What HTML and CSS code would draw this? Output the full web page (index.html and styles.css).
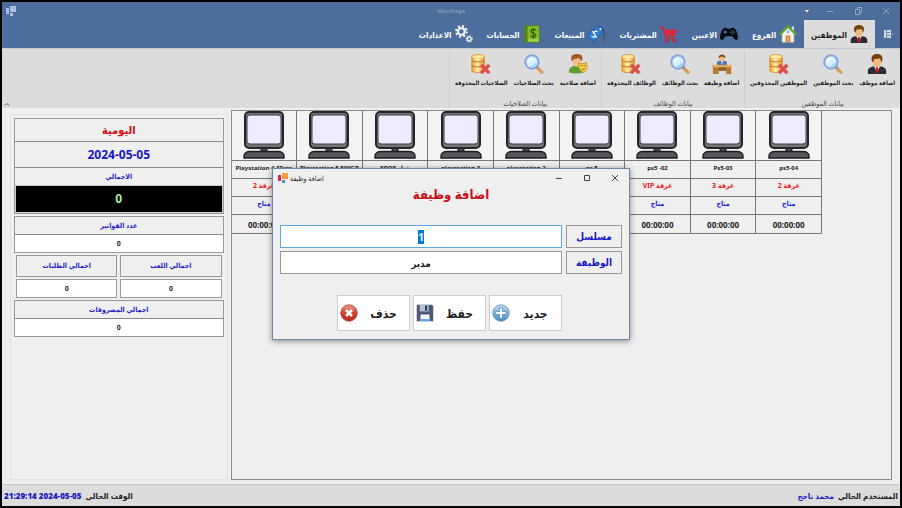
FILE: index.html
```html
<!DOCTYPE html>
<html lang="ar" dir="rtl">
<head>
<meta charset="UTF-8" />
<title>MainPage</title>
<link rel="stylesheet" href="styles.css">
</head>
<body>
  <svg class="sprite" aria-hidden="true">
    <defs>
      <linearGradient id="gold" x2="1"><stop offset="0" stop-color="#e9a02c"/><stop offset=".45" stop-color="#fff0b0"/><stop offset="1" stop-color="#df9428"/></linearGradient>
      <linearGradient id="blue" x2="0" y2="1"><stop offset="0" stop-color="#bfe0f2"/><stop offset="1" stop-color="#4787c4"/></linearGradient>
      <linearGradient id="red" x2="0" y2="1"><stop offset="0" stop-color="#ee9a8c"/><stop offset=".5" stop-color="#d2412f"/><stop offset="1" stop-color="#b52a1e"/></linearGradient>
    </defs>
    <symbol id="i-man" viewBox="0 0 24 24">
      <path d="M1 24v-4c0-3 4-5 7-5h8c3 0 7 2 7 5v4z" fill="#2b2b33"/>
      <path d="M8 14l4 8 4-8z" fill="#eee"/>
      <path d="M11 15.500h2l1 5.500-2 2.500-2-2.500z" fill="#d01820"/>
      <path d="M7 6c0-3 10-3 10 0v4c0 4-3 6-5 6s-5-2-5-6z" fill="#f1b780"/>
      <path d="M6 9c-2-6 1-9 6-9s8 3 6 9l-1 1c0-2-1-4-2-5-2 1-4 1-6 1l-2 4z" fill="#754012"/>
    </symbol>
    <symbol id="i-search" viewBox="0 0 24 24">
      <path d="M15.500 16l6 6" stroke="#d79b59" stroke-width="4" stroke-linecap="round"/>
      <path d="M14 14l3 3" stroke="#7c8fae" stroke-width="3"/>
      <circle cx="9.500" cy="9.500" r="8" fill="#d8f0fd" stroke="#86a6dc" stroke-width="2.500"/>
      <path d="M5 10c0-4 3-6 7-5-3 1-5 3-7 5z" fill="#fff"/>
      <path d="M7 14c3 1 6-1 8-5 0 5-4 8-8 5z" fill="#82c9f3"/>
    </symbol>
    <symbol id="i-deleted" viewBox="0 0 24 24">
      <path d="M1 3c0-3 15-3 15 0v17c0 3-15 3-15 0z" fill="url(#gold)" stroke="#d18d2b"/>
      <path d="M1 8c2 2 13 2 15 0M1 14c2 2 13 2 15 0" fill="none" stroke="#c98025" stroke-width="1.500"/>
      <ellipse cx="8.500" cy="3.300" rx="7" ry="2" fill="#ffe6a0"/>
      <path d="M12 13l10 10M22 13L12 23" stroke="#d94f48" stroke-width="4"/>
    </symbol>
    <symbol id="i-desk" viewBox="0 0 24 24">
      <path d="M6 14v-3c0-3 3-3 6-3s6 0 6 3v3z" fill="#5474b4"/>
      <path d="M11 8h2l-1 5z" fill="#fff"/>
      <circle cx="12" cy="5" r="3.500" fill="#f3bd87"/>
      <path d="M8 5c-1-6 9-6 8 0-2-1-3-2-4-2s-2 1-4 2z" fill="#7e4818"/>
      <path d="M0 13h24v3H0z" fill="#e1ad62"/>
      <path d="M1 16h22v8h-6v-4H8v4H1z" fill="#b87932"/>
      <path d="M8 16h9v4H8z" fill="#965d22"/>
    </symbol>
    <symbol id="i-role" viewBox="0 0 24 24">
      <path d="M1 22c0-6 3-7 7-8h5c4 1 6 3 6 8-5 2-13 2-18 0z" fill="#5c9e31"/>
      <path d="M6 6h9v4c0 7-9 7-9 0z" fill="#f4bd88"/>
      <path d="M5 9C2 3 5 0 11 0s8 4 5 9c-1-2-2-4-4-4-2 1-4 1-5 1z" fill="#a35a22"/>
      <path d="M13 11c3 1 6 1 9-1 2 7 0 11-4 12-3-1-6-5-5-11z" fill="#f7ce45" stroke="#b98b1c"/>
      <path d="M15 14h2m2 0h2m-5 4c2 1 2 1 4-1" fill="none" stroke="#6c4b12"/>
    </symbol>
    <symbol id="i-house" viewBox="0 0 24 24">
      <path d="M4 11l8-8 8 8v12H4z" fill="#f5f5ee" stroke="#aaa"/>
      <path d="M17 2h3v7l-3-3z" fill="#d9e2e8"/>
      <path d="M1 13L12 2l11 11" fill="none" stroke="#63a62f" stroke-width="3"/>
      <path d="M9 14h6v9H9z" fill="#c9742c"/>
      <path d="M10.500 15h3v7h-3z" fill="#eda75e"/>
      <circle cx="12" cy="9" r="2" fill="#7cb6e5"/>
    </symbol>
    <symbol id="i-pad" viewBox="0 0 24 24">
      <path d="M6 4c2-1 3 1 4 1h4c1 0 2-2 4-1 4 1 5 7 6 12 0 5-4 5-6 1-1-2-2-2-3-2H9c-1 0-2 0-3 2-2 4-6 4-6-1C1 11 2 5 6 4z" fill="#090b10"/>
      <path d="M4.500 9.500h5M7 7v5" stroke="#4c6d9d" stroke-width="1.500"/>
      <g fill="#4c6d9d"><circle cx="17" cy="7.500" r="1"/><circle cx="17" cy="11.500" r="1"/><circle cx="15" cy="9.500" r="1"/><circle cx="19" cy="9.500" r="1"/></g>
    </symbol>
    <symbol id="i-cart" viewBox="0 0 24 24">
      <path d="M0 3h4l4 15h12" fill="none" stroke="#cf2338" stroke-width="2"/>
      <path d="M5 6h18l-3 9H8z" fill="#d8283e"/>
      <circle cx="9" cy="21" r="2.300" fill="#cf2338"/><circle cx="19" cy="21" r="2.300" fill="#cf2338"/>
    </symbol>
    <symbol id="i-tag" viewBox="0 0 24 24">
      <path d="M19 4c6 3 5 10 2 18" fill="none" stroke="#444c5a" stroke-width="1.500"/>
      <path d="M0 14L13 2l7 1 1 7L9 23z" fill="#2d7dcc" stroke="#1f579d"/>
      <circle cx="18" cy="5.500" r="1.300" fill="#fff"/>
      <path d="M14 9c-3-2-6 0-4 3s0 6-4 3M7 8l6 9" fill="none" stroke="#fff" stroke-width="1.600"/>
    </symbol>
    <symbol id="i-book" viewBox="0 0 24 24">
      <path d="M2 1h20v22H2z" fill="#83b92b" stroke="#4e7914"/>
      <path d="M2 1h4v22H2z" fill="#55831a"/>
      <path d="M7 19h14v3H7z" fill="#a6d253"/>
      <path d="M17 7c-3-3-7-1-6 2s7 2 6 5-5 3-7 0M14 4v14" fill="none" stroke="#345d0b" stroke-width="1.800"/>
    </symbol>
    <symbol id="i-gears" viewBox="0 0 24 24">
      <circle cx="8.500" cy="8.500" r="4.500" fill="none" stroke="#eef0f3" stroke-width="3"/>
      <circle cx="8.500" cy="8.500" r="7" fill="none" stroke="#eef0f3" stroke-width="3" stroke-dasharray="2.750 2.750"/>
      <circle cx="19" cy="18.500" r="2.500" fill="none" stroke="#dfe3e8" stroke-width="2"/>
      <circle cx="19" cy="18.500" r="4" fill="none" stroke="#dfe3e8" stroke-width="2" stroke-dasharray="1.570 1.570"/>
    </symbol>
    <symbol id="i-screen" viewBox="0 0 42 48">
      <path d="M18 37h6v6h-6z" fill="#4b4b50" stroke="#1e1e20"/>
      <path d="M1 47v-2c0-3 3-4.500 6-4.500h28c3 0 6 1.500 6 4.500v2z" fill="#56565c" stroke="#1e1e20" stroke-width="1.400"/>
      <rect x="2" y="1" width="38" height="36" rx="4" fill="#737379" stroke="#262629" stroke-width="2"/>
      <rect x="4" y="4" width="34" height="29" rx="3" fill="#eeeaff" stroke="#414147"/>
    </symbol>
    <symbol id="i-plus" viewBox="0 0 24 24">
      <circle cx="12" cy="12" r="11" fill="url(#blue)" stroke="#5486ae"/>
      <path d="M10 5h4v5h5v4h-5v5h-4v-5H5v-4h5z" fill="#f4fbff" stroke="#4c83b5"/>
    </symbol>
    <symbol id="i-save" viewBox="0 0 24 24">
      <path d="M1 1h20l2 2v20H1z" fill="#4d5875"/>
      <path d="M5 1h12v9H5z" fill="#b9c2d4"/><path d="M12 2h3v7h-3z" fill="#39435d"/>
      <path d="M6 14h12v9H6z" fill="#f3f7fb"/><path d="M6 20h12v3H6z" fill="#5aa9e4"/>
    </symbol>
    <symbol id="i-remove" viewBox="0 0 24 24">
      <circle cx="12" cy="12" r="11" fill="url(#red)" stroke="#a43b31"/>
      <path d="M8 8l8 8M16 8l-8 8" stroke="#fff" stroke-width="3.500"/>
    </symbol>
    <symbol id="i-min" viewBox="0 0 10 10"><path d="M2 5.500h6" stroke="currentColor"/></symbol>
    <symbol id="i-max" viewBox="0 0 10 10"><path d="M2.500 2.500h5v5h-5z" fill="none" stroke="currentColor"/></symbol>
    <symbol id="i-restore" viewBox="0 0 10 10"><path d="M2.500 3.500h4v5h-4zM4.500 3V1.500h4v5H7" fill="none" stroke="currentColor"/></symbol>
    <symbol id="i-close" viewBox="0 0 10 10"><path d="M2 2l6 6M8 2L2 8" stroke="currentColor"/></symbol>
  </svg>

  <div class="window">
    <header class="titlebar" dir="ltr">
      <svg class="app-icon" viewBox="0 0 10 10"><path d="M4 0h6v6H4zM0 2h3v6H0zM4 7h3v3H4z" fill="#a9bfe2"/></svg>
      <h1>MainPage</h1>
      <div class="window-buttons">
        <button class="more" aria-label="Options"><svg viewBox="0 0 10 10"><path d="M3 4h4L5 6.500z" fill="#fff"/></svg></button>
        <button aria-label="Minimize"><svg><use href="#i-min"/></svg></button>
        <button aria-label="Restore"><svg><use href="#i-restore"/></svg></button>
        <button aria-label="Close"><svg><use href="#i-close"/></svg></button>
      </div>
    </header>

    <nav class="tabs">
      <button class="file" aria-label="القائمة"><svg viewBox="0 0 10 8"><path d="M1 0h7v8H1z" fill="#cfd9e8"/><path d="M3.500 0v8M4 2.500h3M4 5.500h3" stroke="#71839d"/><path d="M9 4h1" stroke="#dfe6f1"/></svg></button>
      <button class="active"><svg><use href="#i-man"/></svg>الموظفين</button>
      <button><svg><use href="#i-house"/></svg>الفروع</button>
      <button><svg><use href="#i-pad"/></svg>الاعبين</button>
      <button><svg><use href="#i-cart"/></svg>المشتريات</button>
      <button><svg><use href="#i-tag"/></svg>المبيعات</button>
      <button><svg><use href="#i-book"/></svg>الحسابات</button>
      <button><svg><use href="#i-gears"/></svg>الاعدادات</button>
    </nav>

    <div class="ribbon">
      <section class="group">
        <div class="tools">
          <button><svg><use href="#i-man"/></svg>اضافة موظف</button>
          <button><svg><use href="#i-search"/></svg>بحث الموظفين</button>
          <button><svg><use href="#i-deleted"/></svg>الموظفين المحذوفين</button>
        </div>
        <h2>بيانات الموظفين</h2>
      </section>
      <section class="group">
        <div class="tools">
          <button><svg><use href="#i-desk"/></svg>اضافة وظيفة</button>
          <button><svg><use href="#i-search"/></svg>بحث الوظائف</button>
          <button><svg><use href="#i-deleted"/></svg>الوظائف المحذوفة</button>
        </div>
        <h2>بيانات الوظائف</h2>
      </section>
      <section class="group">
        <div class="tools">
          <button><svg><use href="#i-role"/></svg>اضافة صلاحية</button>
          <button><svg><use href="#i-search"/></svg>بحث الصلاحيات</button>
          <button><svg><use href="#i-deleted"/></svg>الصلاحيات المحذوفة</button>
        </div>
        <h2>بيانات الصلاحيات</h2>
      </section>
      <button class="collapse" aria-label="طي"><svg viewBox="0 0 6 4"><path d="M1 3.500l2-2 2 2" fill="none" stroke="#555"/></svg></button>
    </div>

    <main>
      <div class="stations" dir="ltr">
        <article class="station"><div class="screen"><svg><use href="#i-screen"/></svg></div><h3>Playstation 4 1Tera</h3><p class="room" dir="rtl">غرفة 2</p><p class="state">متاح</p><time>00:00:00</time></article>
        <article class="station"><div class="screen"><svg><use href="#i-screen"/></svg></div><h3>Playstation 5 500GB</h3><p class="room" dir="rtl">غرفة 2</p><p class="state">متاح</p><time>00:00:00</time></article>
        <article class="station"><div class="screen"><svg><use href="#i-screen"/></svg></div><h3 dir="rtl">جهاز XBOX</h3><p class="room" dir="rtl">غرفة 2</p><p class="state">متاح</p><time>00:00:00</time></article>
        <article class="station"><div class="screen"><svg><use href="#i-screen"/></svg></div><h3>playstation 3</h3><p class="room" dir="rtl">غرفة 2</p><p class="state">متاح</p><time>00:00:00</time></article>
        <article class="station"><div class="screen"><svg><use href="#i-screen"/></svg></div><h3>playstation 2</h3><p class="room" dir="rtl">غرفة 2</p><p class="state">متاح</p><time>00:00:00</time></article>
        <article class="station"><div class="screen"><svg><use href="#i-screen"/></svg></div><h3>ps 5</h3><p class="room" dir="rtl">غرفة 2</p><p class="state">متاح</p><time>00:00:00</time></article>
        <article class="station"><div class="screen"><svg><use href="#i-screen"/></svg></div><h3>ps5 -02</h3><p class="room" dir="rtl">غرفة VIP</p><p class="state">متاح</p><time>00:00:00</time></article>
        <article class="station"><div class="screen"><svg><use href="#i-screen"/></svg></div><h3>Ps5-03</h3><p class="room" dir="rtl">غرفة 3</p><p class="state">متاح</p><time>00:00:00</time></article>
        <article class="station"><div class="screen"><svg><use href="#i-screen"/></svg></div><h3>ps5-04</h3><p class="room" dir="rtl">غرفة 2</p><p class="state">متاح</p><time>00:00:00</time></article>
      </div>

      <aside class="daily">
        <div class="box">
          <h2 class="heading">اليومية</h2>
          <p class="date">2024-05-05</p>
          <p class="caption">الاجمالي</p>
          <p class="total">0</p>
        </div>
        <div class="box">
          <p class="caption">عدد الفواتير</p>
          <p class="value">0</p>
        </div>
        <div class="split">
          <p class="caption">اجمالي اللعب</p>
          <p class="caption">اجمالي الطلبات</p>
          <p class="value">0</p>
          <p class="value">0</p>
        </div>
        <div class="box">
          <p class="caption">اجمالي المصروفات</p>
          <p class="value">0</p>
        </div>
      </aside>
    </main>

    <footer class="status">
      <p>المستخدم الحالي <b>محمد ناجح</b></p>
      <p>الوقت الحالي <b dir="ltr">21:29:14 2024-05-05</b></p>
    </footer>
  </div>

  <div class="overlay">
    <form class="dialog" role="dialog" aria-labelledby="dialog-title">
      <div class="dialog-bar" dir="ltr">
        <svg class="app-icon" viewBox="0 0 10 10"><path d="M4 0h6v6H4z" fill="#f29a3c"/><path d="M0 2h3v6H0z" fill="#cf2a48"/><path d="M4 7h3v3H4z" fill="#4a90d0"/></svg>
        <span class="dialog-name">اضافة وظيفة</span>
        <button type="button" aria-label="Minimize"><svg><use href="#i-min"/></svg></button>
        <button type="button" aria-label="Maximize"><svg><use href="#i-max"/></svg></button>
        <button type="button" aria-label="Close"><svg><use href="#i-close"/></svg></button>
      </div>
      <h2 id="dialog-title">اضافة وظيفة</h2>
      <div class="fields">
        <label for="serial">مسلسل</label>
        <input id="serial" type="text" value="1">
        <label for="job">الوظيفة</label>
        <input id="job" type="text" value="مدير">
      </div>
      <div class="actions">
        <button type="button"><span>جديد</span><svg><use href="#i-plus"/></svg></button>
        <button type="button"><span>حفظ</span><svg><use href="#i-save"/></svg></button>
        <button type="button"><span>حذف</span><svg><use href="#i-remove"/></svg></button>
      </div>
    </form>
  </div>

<script>
  const serial = document.getElementById('serial');
  serial.focus();
  serial.select();
</script>
</body>
</html>
```
FILE: styles.css
```css
* {
  box-sizing: border-box;
}
body {
  margin: 0;
  background: #000;
  font-family: "Noto Sans", "DejaVu Sans Condensed", "DejaVu Sans", sans-serif;
  font-size: 7px;
  color: #222;
}
h1, h2, h3, p {
  margin: 0;
  font-size: inherit;
}
button, input {
  font: inherit;
  color: inherit;
}
button {
  border: none;
  background: none;
  padding: 0;
  cursor: pointer;
}
.sprite {
  position: absolute;
  width: 0;
  height: 0;
}
.window {
  display: flex;
  flex-direction: column;
  height: 100vh;
  border: 2px solid #000;
  background: #efefef;
}
.titlebar {
  display: grid;
  grid-template-columns: 1fr auto 1fr;
  align-items: center;
  height: 18px;
  padding: 0 4px;
  background: #4d6d9c;
  color: #91a6c6;
}
.titlebar h1 {
  font-size: 6px;
  font-weight: normal;
}
.app-icon {
  width: 10px;
  height: 10px;
}
.window-buttons {
  display: flex;
  justify-content: flex-end;
  gap: 8px;
}
.window-buttons button {
  width: 20px;
  height: 18px;
}
.window-buttons .more {
  width: 10px;
}
.window-buttons svg,
.dialog-bar button svg {
  display: block;
  width: 10px;
  height: 10px;
  margin: auto;
}
.tabs {
  display: flex;
  height: 28px;
  background: #4d6d9c;
  color: #fff;
}
.tabs button {
  display: flex;
  align-items: center;
  gap: 3px;
  padding: 0 7px;
  font-size: 8px;
  font-weight: bold;
  white-space: nowrap;
}
.tabs svg {
  width: 18px;
  height: 18px;
}
.tabs .file {
  width: 25px;
}
.tabs .file svg {
  width: 10px;
  height: 8px;
}
.tabs .active {
  background: #dcdcdc;
  color: #222;
}
.ribbon {
  display: flex;
  height: 60px;
  border-top: 1px solid #c4c8d2;
  background: #dcdcdc;
}
.group {
  display: flex;
  flex-direction: column;
  justify-content: space-between;
  padding: 5px 5px 0;
  border-left: 1px solid #cecece;
  text-align: center;
}
.group h2 {
  font-weight: normal;
  line-height: 9px;
  color: #444;
}
.tools {
  display: flex;
  gap: 6px;
}
.tools button {
  display: flex;
  flex-direction: column;
  align-items: center;
  gap: 4px;
  font-size: 6px;
  font-weight: bold;
  line-height: 10px;
  white-space: nowrap;
}
.tools svg {
  width: 20px;
  height: 20px;
}
.collapse {
  align-self: flex-end;
  margin-right: auto;
  padding: 2px;
}
.collapse svg {
  display: block;
  width: 6px;
  height: 4px;
}
main {
  flex: 1;
  display: grid;
  grid-template-columns: 76fr 25fr;
  gap: 3px;
  min-height: 0;
  padding: 2px 8px 4px;
}
.stations {
  display: grid;
  grid-template-columns: repeat(9, 1fr);
  align-content: start;
  padding-right: 69px;
  border: 1px solid #8a8a8a;
}
.station {
  min-width: 0;
  border-right: 1px solid #777;
  text-align: center;
  font-weight: bold;
  white-space: nowrap;
}
.station > * {
  display: block;
  height: 18px;
  line-height: 14px;
  border-bottom: 1px solid #777;
}
.station .screen {
  height: 50px;
  background: #f3f3f3;
}
.screen svg {
  width: 42px;
  height: 48px;
}
.station h3 {
  font-size: 6px;
}
.room {
  color: #f01818;
}
.state {
  color: #2222e0;
}
.station time {
  height: 19px;
  font-size: 8px;
  line-height: 19px;
}
.daily {
  display: flex;
  flex-direction: column;
  gap: 2px;
  margin-top: 4px;
  padding: 3px;
  border: 1px solid #e2e2e2;
  text-align: center;
  font-weight: bold;
}
.box {
  border: 1px solid #999;
}
.box p + p,
.heading + .date {
  border-top: 1px solid #888;
}
.heading {
  font-size: 11px;
  line-height: 22px;
  color: #d01010;
}
.date {
  font-size: 12px;
  line-height: 25px;
  color: #1616c8;
}
.caption {
  line-height: 17px;
  color: #2424c8;
}
.value {
  line-height: 17px;
  background: #fff;
}
.box .total {
  border: 1px solid #ccc;
  background: #000;
  color: #a4eca4;
  font-size: 12px;
  line-height: 26px;
}
.split {
  display: grid;
  grid-template-columns: 1fr 1fr;
  gap: 2px 3px;
  padding: 0 2px;
}
.split p {
  border: 1px solid #999;
}
.split .caption {
  line-height: 20px;
}
.status {
  display: flex;
  justify-content: space-between;
  align-items: center;
  height: 22px;
  padding: 0 2px;
  border-top: 1px solid #c8c8c8;
  background: #dcdcdc;
  font-size: 8px;
  font-weight: bold;
}
.status b {
  margin-right: 2px;
  color: #1c1cc0;
}
.overlay {
  position: absolute;
  inset: 0;
  display: flex;
  align-items: center;
  justify-content: center;
}
.dialog {
  width: 36%;
  min-width: 358px;
  padding-bottom: 8px;
  border: 1px solid #6f87a8;
  background: #efefef;
  box-shadow: 0 1px 6px rgba(0, 0, 0, 0.45);
}
.dialog-bar {
  display: flex;
  align-items: center;
  height: 18px;
  padding-left: 5px;
}
.dialog-name {
  flex: 1;
  margin-left: 2px;
}
.dialog-bar button {
  width: 28px;
  height: 18px;
  color: #444;
}
.dialog h2 {
  font-size: 13px;
  line-height: 15px;
  text-align: center;
  color: #c81018;
}
.fields {
  display: grid;
  grid-template-columns: 56px 1fr;
  gap: 3px 4px;
  margin: 23px 7px 21px;
  font-size: 10px;
  font-weight: bold;
}
.fields label {
  border: 1px solid #999;
  line-height: 21px;
  text-align: center;
  color: #1818c8;
}
.fields input {
  min-width: 0;
  height: 23px;
  border: 1px solid #999;
  background: #fff;
  text-align: center;
}
.fields input:focus {
  border-color: #5aa7e4;
  outline: none;
}
.fields input::selection {
  background: #0078d7;
  color: #fff;
}
.actions {
  display: flex;
  gap: 3px;
  padding-right: 67px;
}
.actions button {
  display: flex;
  align-items: center;
  width: 73px;
  height: 36px;
  padding-left: 2px;
  border: 1px solid #ccc;
  background: #fff;
  font-size: 12px;
  font-weight: bold;
}
.actions span {
  flex: 1;
}
.actions svg {
  width: 18px;
  height: 18px;
}
```
